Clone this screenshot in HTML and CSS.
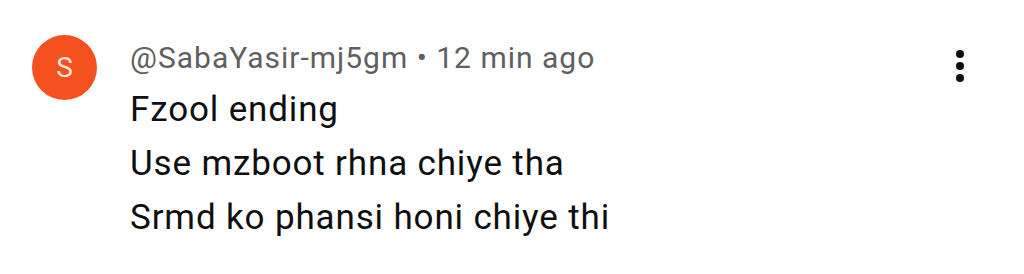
FILE: index.html
```html
<!DOCTYPE html>
<html lang="en">

<head>
    <meta charset="UTF-8">
    <meta name="viewport" content="width=device-width, initial-scale=1.0">
    <title>Comment</title>
    <link rel="stylesheet" href="styles.css">
</head>

<body>

    <div class="comment">
        <div class="avatar">S</div>
        <div class="comment-body">
            <div class="comment-head">@SabaYasir-mj5gm • 12 min ago</div>
            <div class="comment-text">
                <div>Fzool ending</div>
                <div>Use mzboot rhna chiye tha</div>
                <div>Srmd ko phansi honi chiye thi</div>
            </div>
        </div>
        <button class="more" aria-label="More actions">
            <span class="dot"></span>
            <span class="dot"></span>
            <span class="dot"></span>
        </button>
    </div>

</body>

</html>
```

FILE: styles.css
```css
body {
    margin: 0;
    background: #ffffff;
    font-family: Roboto, "Liberation Sans", sans-serif;
    color: #0f0f0f;
}

.comment {
    display: flex;
    align-items: flex-start;
    padding: 35px 0 0 32px;
}

.avatar {
    flex: none;
    width: 65px;
    height: 65px;
    border-radius: 50%;
    background: #f4511e;
    color: #fde6de;
    font-size: 28px;
    display: flex;
    justify-content: center;
    align-items: center;
}

.comment-body {
    flex: 1;
    margin-left: 33px;
    margin-top: 5px;
}

.comment-head {
    font-size: 30px;
    line-height: 36px;
    letter-spacing: 1px;
    color: #606060;
}

.comment-text {
    margin-top: 7px;
    font-size: 35px;
    line-height: 54px;
    letter-spacing: 0.85px;
}

.more {
    flex: none;
    display: flex;
    flex-direction: column;
    align-items: center;
    gap: 4px;
    margin: 15px 60px 0 0;
    padding: 0;
    border: none;
    background: none;
    width: 8px;
}

.dot {
    width: 8px;
    height: 8px;
    border-radius: 50%;
    background: #0f0f0f;
}
```
